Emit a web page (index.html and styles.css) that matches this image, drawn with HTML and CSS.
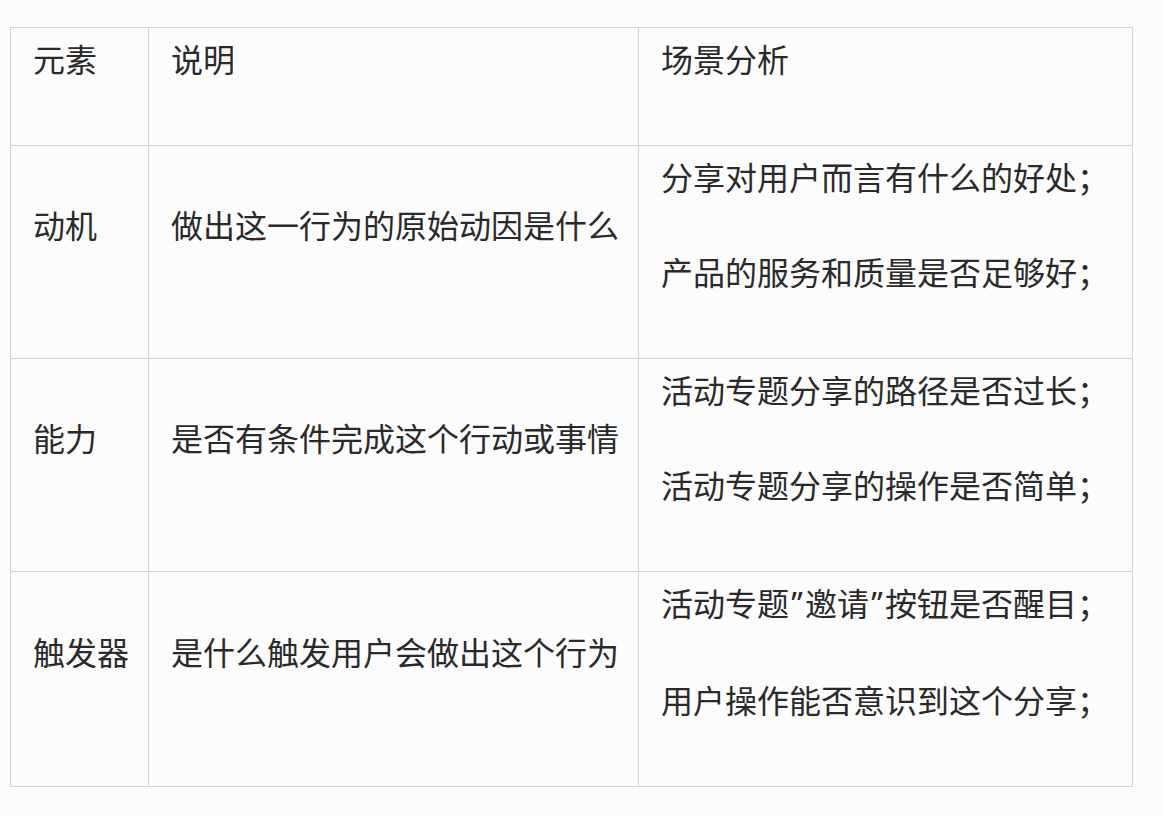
FILE: index.html
```html
<!DOCTYPE html>
<html lang="zh-CN">
<head>
<meta charset="utf-8">
<title>表格</title>
<link rel="stylesheet" href="styles.css">
</head>
<body>
<div class="page">
  <table class="grid">
    <colgroup>
      <col class="c1">
      <col class="c2">
      <col class="c3">
    </colgroup>
    <tr>
      <td><p>元素</p></td>
      <td><p>说明</p></td>
      <td><p>场景分析</p></td>
    </tr>
    <tr>
      <td><p>动机</p></td>
      <td><p>做出这一行为的原始动因是什么</p></td>
      <td><p>分享对用户而言有什么的好处；</p><p>产品的服务和质量是否足够好；</p></td>
    </tr>
    <tr>
      <td><p>能力</p></td>
      <td><p>是否有条件完成这个行动或事情</p></td>
      <td><p>活动专题分享的路径是否过长；</p><p>活动专题分享的操作是否简单；</p></td>
    </tr>
    <tr>
      <td><p>触发器</p></td>
      <td><p>是什么触发用户会做出这个行为</p></td>
      <td><p>活动专题<span class="q">”</span>邀请<span class="q">”</span>按钮是否醒目；</p><p>用户操作能否意识到这个分享；</p></td>
    </tr>
  </table>
</div>
</body>
</html>
```
FILE: styles.css
```css
html, body {
  margin: 0;
  padding: 0;
  background: #fcfcfd;
}
.page {
  padding: 27px 0 0 10px;
}
.grid {
  border-collapse: collapse;
  width: 1122px;
  table-layout: fixed;
  font-family: "Noto Sans CJK SC", "Noto Sans", sans-serif;
  font-size: 32px;
  color: #2a2a2a;
  background: #fcfcfd;
}
.c1 { width: 138px; }
.c2 { width: 490px; }
.c3 { width: 494px; }
.grid td {
  border: 1px solid #d2d2d4;
  padding: 6px 22px 16px;
  vertical-align: middle;
}
.grid p {
  margin: 0 0 47px;
  line-height: 48px;
  white-space: nowrap;
}
.q {
  font-family: "Noto Sans", sans-serif;
  display: inline-block;
  width: 16px;
  text-align: center;
}
```
